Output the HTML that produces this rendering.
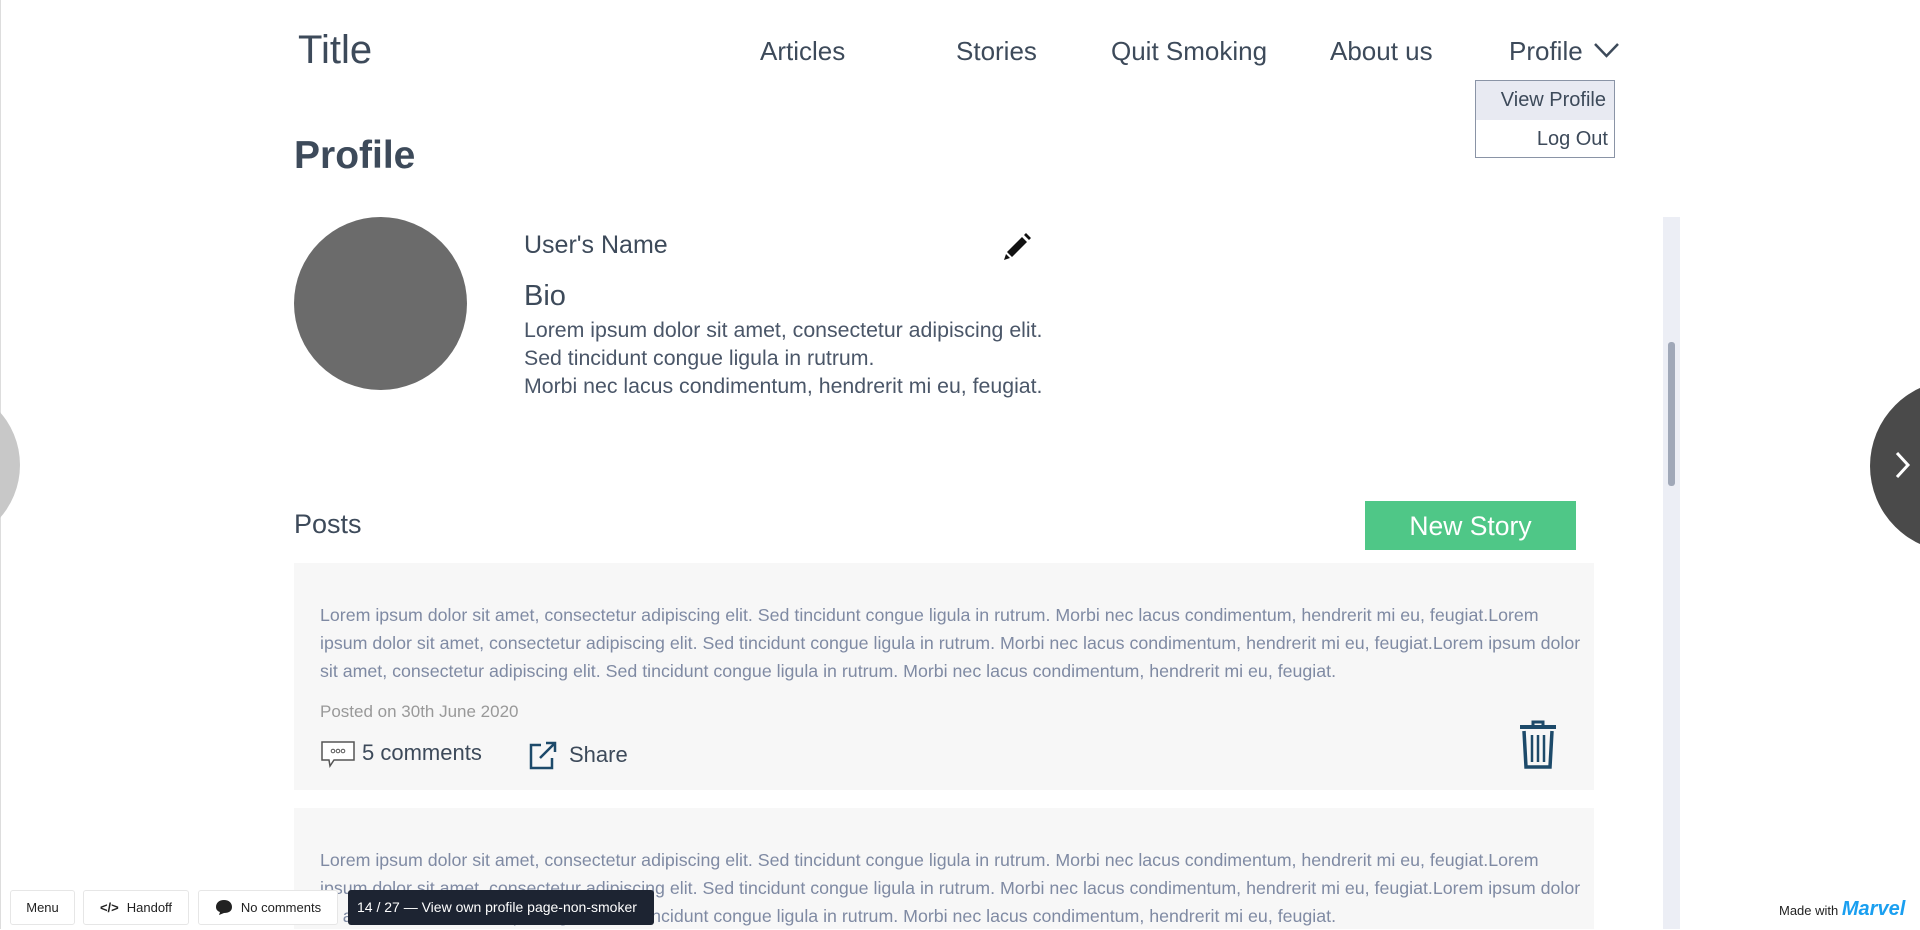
<!DOCTYPE html>
<html><head><meta charset="utf-8"><style>
*{margin:0;padding:0;box-sizing:border-box}
body{width:1920px;height:929px;overflow:hidden;background:#fff;font-family:"Liberation Sans",sans-serif;color:#3d4a5a;position:relative}
.a{position:absolute;white-space:nowrap}
.nav{font-size:26px;color:#3d4a5a;top:36px}
.lorem{font-size:17.8px;color:#7f8aa3;line-height:28px;left:320px}
.btn{position:absolute;top:890px;height:35px;background:#fff;border:1px solid #e6e6e6;border-radius:3px;font-size:13px;color:#222;display:flex;align-items:center;justify-content:center;gap:8px}
</style></head><body>
<div class="a" style="left:0;top:0;width:1px;height:929px;background:#ddd"></div>
<div class="a" style="left:298px;top:28px;font-size:40px">Title</div>
<div class="a nav" style="left:760px">Articles</div>
<div class="a nav" style="left:956px">Stories</div>
<div class="a nav" style="left:1111px">Quit Smoking</div>
<div class="a nav" style="left:1330px">About us</div>
<div class="a nav" style="left:1509px">Profile</div>
<svg class="a" style="left:1593px;top:41px" width="27" height="18" viewBox="0 0 27 18"><path d="M2 3 L13.5 15 L25 3" fill="none" stroke="#3d4a5a" stroke-width="2.5"/></svg>
<div class="a" style="left:1475px;top:80px;width:140px;height:78px;border:1px solid #8a94a6;background:#fff">
<div style="height:39px;background:#e8eaf2;text-align:right;padding-right:8px;font-size:20px;line-height:39px">View Profile</div>
<div style="height:38px;text-align:right;padding-right:6px;font-size:20px;line-height:38px">Log Out</div></div>
<div class="a" style="left:294px;top:134px;font-size:39px;font-weight:bold">Profile</div>
<div class="a" style="left:294px;top:217px;width:173px;height:173px;border-radius:50%;background:#6b6b6b"></div>
<div class="a" style="left:524px;top:231px;font-size:25px">User's Name</div>
<svg class="a" style="left:1004px;top:232px" width="28" height="29" viewBox="0 0 28 29"><path d="M3 20 L18 5 L23 10 L8 25 Z M20 3 L22 1 L27 6 L25 8 Z M2 22 L6 26 L0 28 Z" fill="#111"/></svg>
<div class="a" style="left:524px;top:280px;font-size:29px">Bio</div>
<div class="a" style="left:524px;top:316px;font-size:21.3px;line-height:28px;color:#4a5668">Lorem ipsum dolor sit amet, consectetur adipiscing elit.<br>Sed tincidunt congue ligula in rutrum.<br>Morbi nec lacus condimentum, hendrerit mi eu, feugiat.</div>
<div class="a" style="left:1663px;top:217px;width:17px;height:712px;background:#eceef5"></div>
<div class="a" style="left:1668px;top:342px;width:7px;height:144px;background:#a0a8b8;border-radius:3px"></div>
<div class="a" style="left:294px;top:509px;font-size:27px">Posts</div>
<div class="a" style="left:1365px;top:501px;width:211px;height:49px;background:#4fc787;color:#fff;font-size:26.5px;text-align:center;line-height:50px">New Story</div>
<div class="a" style="left:294px;top:563px;width:1300px;height:227px;background:#f7f7f7"></div>
<div class="a lorem" style="top:601px">Lorem ipsum dolor sit amet, consectetur adipiscing elit. Sed tincidunt congue ligula in rutrum. Morbi nec lacus condimentum, hendrerit mi eu, feugiat.Lorem<br>ipsum dolor sit amet, consectetur adipiscing elit. Sed tincidunt congue ligula in rutrum. Morbi nec lacus condimentum, hendrerit mi eu, feugiat.Lorem ipsum dolor<br>sit amet, consectetur adipiscing elit. Sed tincidunt congue ligula in rutrum. Morbi nec lacus condimentum, hendrerit mi eu, feugiat.</div>
<div class="a" style="left:320px;top:702px;font-size:17px;color:#999">Posted on 30th June 2020</div>
<svg class="a" style="left:320px;top:740px" width="36" height="30" viewBox="0 0 36 30"><path d="M2 2 H34 V20 H14 L10 26 L9 20 H2 Z" fill="#fff" stroke="#555" stroke-width="1.5"/><circle cx="13" cy="11" r="1.8" fill="none" stroke="#555"/><circle cx="18" cy="11" r="1.8" fill="none" stroke="#555"/><circle cx="23" cy="11" r="1.8" fill="none" stroke="#555"/></svg>
<div class="a" style="left:362px;top:740px;font-size:22px">5 comments</div>
<svg class="a" style="left:529px;top:741px" width="28" height="29" viewBox="0 0 28 29"><path d="M12 4 H2 V27 H23 V17" fill="none" stroke="#1d4a6a" stroke-width="2.5"/><path d="M11 17 L25 3 M17 2 H26 V11" fill="none" stroke="#1d4a6a" stroke-width="2.5"/></svg>
<div class="a" style="left:569px;top:742px;font-size:22px">Share</div>
<svg class="a" style="left:1517px;top:720px" width="42" height="50" viewBox="0 0 42 50"><path d="M16 5 V2 H26 V5" fill="none" stroke="#1d4a6a" stroke-width="3"/><path d="M3 7 H39" stroke="#1d4a6a" stroke-width="4"/><path d="M7 11 L9 47 H33 L35 11" fill="none" stroke="#1d4a6a" stroke-width="3.5"/><path d="M15 15 V42 M21 15 V42 M27 15 V42" stroke="#1d4a6a" stroke-width="2.5"/></svg>
<div class="a" style="left:294px;top:808px;width:1300px;height:121px;background:#f7f7f7"></div>
<div class="a lorem" style="top:846px">Lorem ipsum dolor sit amet, consectetur adipiscing elit. Sed tincidunt congue ligula in rutrum. Morbi nec lacus condimentum, hendrerit mi eu, feugiat.Lorem<br>ipsum dolor sit amet, consectetur adipiscing elit. Sed tincidunt congue ligula in rutrum. Morbi nec lacus condimentum, hendrerit mi eu, feugiat.Lorem ipsum dolor<br>sit amet, consectetur adipiscing elit. Sed tincidunt congue ligula in rutrum. Morbi nec lacus condimentum, hendrerit mi eu, feugiat.</div>
<div class="a" style="left:-140px;top:385px;width:160px;height:160px;border-radius:50%;background:#c8c8c8"></div>
<div class="a" style="left:1870px;top:380px;width:172px;height:172px;border-radius:50%;background:#4a4a4a"></div>
<svg class="a" style="left:1893px;top:450px" width="18" height="30" viewBox="0 0 18 30"><path d="M4 3 L15 15 L4 27" fill="none" stroke="#fff" stroke-width="3"/></svg>
<div class="btn" style="left:10px;width:65px">Menu</div>
<div class="btn" style="left:83px;width:106px"><span style="font-weight:bold">&lt;/&gt;</span>Handoff</div>
<div class="btn" style="left:198px;width:140px"><svg width="18" height="17" viewBox="0 0 18 17"><path d="M9 1 C14 1 17 4 17 8 C17 12 14 14 9 14 L4 16 L5 13 C2 12 1 10 1 8 C1 4 4 1 9 1Z" fill="#222"/></svg>No comments</div>
<div class="a" style="left:348px;top:890px;width:306px;height:35px;background:#1d2432;color:#fff;font-size:14px;line-height:35px;padding-left:9px;border-radius:3px">14 / 27 — View own profile page-non-smoker</div>
<div class="a" style="left:1779px;top:898px;font-size:13px;color:#222">Made with <span style="font-style:italic;font-weight:bold;color:#1a9ff0;font-size:20px">Marvel</span></div>
</body></html>
